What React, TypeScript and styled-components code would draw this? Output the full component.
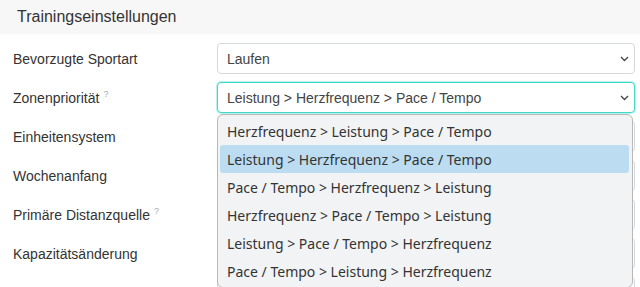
import React from 'react';
import styled, { createGlobalStyle } from 'styled-components';

const Global = createGlobalStyle`
  html, body { margin: 0; padding: 0; background: #fff; }
  body { font-family: "Liberation Sans", Arial, sans-serif; overflow: hidden; }
`;

const Card = styled.div`
  width: 640px;
`;

const Header = styled.div`
  height: 34px;
  background: #f7f7f7;
  padding-left: 17px;
  display: flex;
  align-items: center;
  font-size: 16px;
  color: #333;
`;

const Body = styled.div`
  padding: 9px 5px 0 13px;
  display: flex;
  flex-direction: column;
  gap: 8px;
`;

const Row = styled.div`
  display: grid;
  grid-template-columns: 204px 1fr;
  align-items: center;
  height: 31px;
`;

const Label = styled.div`
  font-size: 14px;
  color: #333;
  white-space: nowrap;
`;

const Hint = styled.span`
  font-size: 9px;
  color: #aaa;
  margin-left: 4px;
  position: relative;
  top: -6px;
`;

const SelectWrap = styled.div`
  position: relative;
  height: 31px;
`;

const SelectBox = styled.div<{ $focused?: boolean }>`
  box-sizing: border-box;
  height: 31px;
  border: 1px solid ${(p) => (p.$focused ? '#3fdac7' : '#d6d9dc')};
  box-shadow: ${(p) => (p.$focused ? '0 0 0 1px rgba(63, 218, 199, 0.35)' : 'none')};
  border-radius: 4px;
  padding: 0 5px 0 9px;
  display: flex;
  align-items: center;
  justify-content: space-between;
  font-size: 14px;
  color: #444;
  background: #fff;
`;

const Chevron = () => (
  <svg width="9" height="6" viewBox="0 0 9 6">
    <path d="M1 1 L4.5 4.5 L8 1" fill="none" stroke="#444" strokeWidth="1.3" />
  </svg>
);

const Menu = styled.div`
  position: absolute;
  top: 32px;
  left: 0;
  right: 2px;
  z-index: 10;
  box-sizing: border-box;
  background: #f2f3f5;
  border: 1px solid #b8b8b8;
  border-radius: 6px;
  padding: 2px 3px 2px 2px;
  font-family: "Noto Sans", "Open Sans", sans-serif;
`;

const Option = styled.div<{ $selected?: boolean }>`
  height: 28px;
  display: flex;
  align-items: center;
  padding-left: 7px;
  font-size: 14px;
  color: #333;
  border-radius: 3px;
  background: ${(p) => (p.$selected ? '#bcddf1' : 'transparent')};
  white-space: nowrap;
`;

const options = [
  'Herzfrequenz > Leistung > Pace / Tempo',
  'Leistung > Herzfrequenz > Pace / Tempo',
  'Pace / Tempo > Herzfrequenz > Leistung',
  'Herzfrequenz > Pace / Tempo > Leistung',
  'Leistung > Pace / Tempo > Herzfrequenz',
  'Pace / Tempo > Leistung > Herzfrequenz',
];

type RowDef = { label: string; hint?: boolean; value: string };

const rows: RowDef[] = [
  { label: 'Bevorzugte Sportart', value: 'Laufen' },
  { label: 'Zonenpriorität', hint: true, value: 'Leistung > Herzfrequenz > Pace / Tempo' },
  { label: 'Einheitensystem', value: 'Metrisch' },
  { label: 'Wochenanfang', value: 'Montag' },
  { label: 'Primäre Distanzquelle', hint: true, value: 'GPS' },
  { label: 'Kapazitätsänderung', value: 'Automatisch' },
  { label: 'Ruhepuls', value: '60' },
];

export default function App() {
  return (
    <Card>
      <Global />
      <Header>Trainingseinstellungen</Header>
      <Body>
        {rows.map((r, i) => (
          <Row key={r.label}>
            <Label>
              {r.label}
              {r.hint && <Hint>?</Hint>}
            </Label>
            <SelectWrap>
              <SelectBox $focused={i === 1}>
                <span>{r.value}</span>
                <Chevron />
              </SelectBox>
              {i === 1 && (
                <Menu>
                  {options.map((o) => (
                    <Option key={o} $selected={o === r.value}>
                      {o}
                    </Option>
                  ))}
                </Menu>
              )}
            </SelectWrap>
          </Row>
        ))}
      </Body>
    </Card>
  );
}
